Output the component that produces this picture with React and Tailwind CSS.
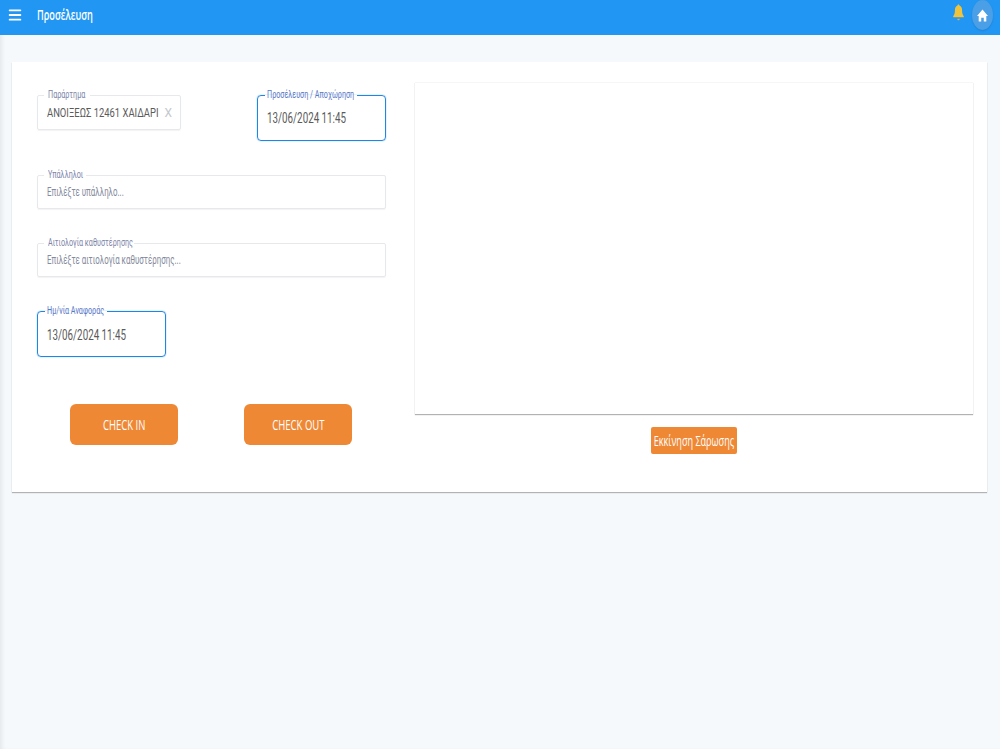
import { Menu } from 'lucide-react'

function Squeezed({ children, className = 'origin-left scale-x-[.72]' }) {
  return <span className={`inline-block whitespace-nowrap ${className}`}>{children}</span>
}

function Field({ label, focused, legendClass = '', className = '', children }) {
  const border = focused
    ? 'border border-[#1f86e3] rounded-[4px] shadow-[0_0_1px_#1f86e3]'
    : 'border border-[#e6e8ec] rounded-[2px] shadow-[0_1px_1px_rgba(0,0,0,0.05)]'
  return (
    <fieldset className={`${border} bg-white min-w-0 ${className}`}>
      <legend className={`h-[10px] leading-[10px] text-[10px] whitespace-nowrap ${focused ? 'ml-[7px] pl-[2px] text-[#5a78c8]' : 'ml-[6px] pl-[4px] text-[#7c84a8]'} ${legendClass}`}>
        <Squeezed>{label}</Squeezed>
      </legend>
      {children}
    </fieldset>
  )
}

function DateField({ label, legendClass, className = '', textClass = 'pt-[8px]' }) {
  return (
    <Field label={label} focused legendClass={legendClass} className={`h-[51px] w-[129px] ${className}`}>
      <div className={`pl-[9px] text-[14px] leading-[20px] text-[#5a5a5a] ${textClass}`}>
        <Squeezed className="origin-left scale-x-[.7]">13/06/2024 11:45</Squeezed>
      </div>
    </Field>
  )
}

function Placeholder({ label, text, legendClass }) {
  return (
    <Field label={label} legendClass={legendClass} className="h-[39px]">
      <div className="pl-[9px] pt-[4px] text-[12px] leading-[16px] text-[#858a9c]">
        <Squeezed className="origin-left scale-x-[.66]">{text}</Squeezed>
      </div>
    </Field>
  )
}

function OrangeButton({ children }) {
  return (
    <button className="flex h-[41px] w-[108px] items-center justify-center rounded-[6px] bg-[#ef8835] text-[14px] text-white font-['Open_Sans',sans-serif]">
      <Squeezed className="shrink-0 origin-center scale-x-[.68]">{children}</Squeezed>
    </button>
  )
}

export default function App() {
  return (
    <div className="min-h-[749px] bg-[#f5f9fc] shadow-[inset_4px_0_4px_-2px_rgba(0,0,0,0.07)] font-['Roboto',sans-serif]">
      {/* Top bar */}
      <header className="h-[35px] bg-[#2196f3] flex items-start text-white">
        <button className="ml-[7px] mt-[7px]">
          <Menu size={16} strokeWidth={2.8} />
        </button>
        <h1 className="ml-[14px] mt-[4px] text-[15px] leading-[20px] font-semibold font-['Open_Sans',sans-serif]">
          <Squeezed className="origin-left scale-x-[.61]">Προσέλευση</Squeezed>
        </h1>
        <div className="ml-auto flex items-start">
          <svg className="mt-[4px] mr-[7px]" width="13" height="17" viewBox="0 0 16 18" preserveAspectRatio="none">
            <path d="M8 0.5c.8 0 1.2.5 1.2 1.2 2.2.6 3.2 2.5 3.2 5 0 3 .6 4.600 2.100 6.300v.9H1.500V13c1.500-1.700 2.100-3.300 2.100-6.300 0-2.500 1-4.400 3.200-5C6.800 1 7.200.5 8 .5z" fill="#f0c33c" />
            <path d="M6.500 15.500h3c0 1-.6 1.700-1.500 1.700s-1.500-.7-1.500-1.700z" fill="#f0a93c" />
          </svg>
          <div className="mr-[7px] w-[21px] h-[30px] rounded-[50%] bg-[#4a9fe6] flex items-center justify-center shadow-[0_1px_2px_rgba(0,0,0,0.12)]">
            <svg width="11" height="13" viewBox="0 0 13 12" preserveAspectRatio="none">
              <path d="M6.500 0.500L13 6.500h-2v5H8V8H5v3.500H2v-5H0z" fill="#fff" />
            </svg>
          </div>
        </div>
      </header>

      {/* Main card */}
      <main className="mt-[27px] ml-[12px] w-[975px] h-[430px] bg-white shadow-[0_1px_1px_rgba(0,0,0,0.28)] flex pl-[25px] pr-[14px] pt-[20px]">
        <section className="w-[349px] pt-[8px]">
          <div className="flex items-start justify-between">
            <Field label="Παράρτημα" legendClass="w-[46px]" className="h-[40px] w-[144px]">
              <div className="flex items-center pl-[9px] pr-[8px] pt-[1px] h-[25px] text-[13px] text-[#5a5a5a]">
                <Squeezed className="w-[111px] origin-left scale-x-[.725]">ΑΝΟΙΞΕΩΣ 12461 ΧΑΙΔΑΡΙ</Squeezed>
                <span className="ml-auto text-[#c4c7ce] text-[12px]">X</span>
              </div>
            </Field>
            <DateField label="Προσέλευση / Αποχώρηση" legendClass="w-[92px]" />
          </div>
          <div className="mt-[29px] flex flex-col gap-[29px]">
            <Placeholder label="Υπάλληλοι" legendClass="w-[42px]" text="Επιλέξτε υπάλληλο..." />
            <Placeholder label="Αιτιολογία καθυστέρησης" legendClass="w-[90px]" text="Επιλέξτε αιτιολογία καθυστέρησης..." />
          </div>
          <DateField label="Ημ/νία Αναφοράς" legendClass="w-[62px]" className="mt-[29px]" textClass="pt-[9px]" />
          <div className="mt-[47px] flex pl-[33px] gap-[66px]">
            <OrangeButton>CHECK IN</OrangeButton>
            <OrangeButton>CHECK OUT</OrangeButton>
          </div>
        </section>

        <section className="ml-[29px] flex-1 flex flex-col items-center">
          <div className="w-full h-[332px] bg-white shadow-[0_1px_1px_rgba(0,0,0,0.3)] border-t border-[#f6f6f8]" />
          <button className="mt-[13px] -ml-[1px] flex items-center justify-center w-[86px] h-[27px] rounded-[2px] bg-[#ef8835] text-white text-[14px] font-['Open_Sans',sans-serif]">
            <Squeezed className="shrink-0 origin-center scale-x-[.65]">Εκκίνηση Σάρωσης</Squeezed>
          </button>
        </section>
      </main>
    </div>
  )
}
